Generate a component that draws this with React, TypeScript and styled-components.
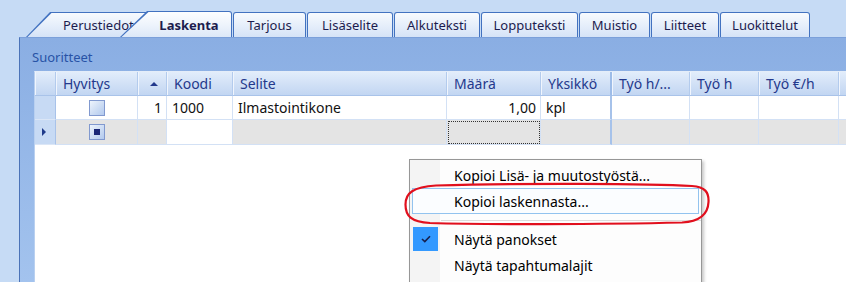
import React from "react";
import styled, { createGlobalStyle, css } from "styled-components";

const GlobalStyle = createGlobalStyle`
  html, body {
    margin: 0;
    padding: 0;
  }
  body {
    background: #c6dbf5;
    font-family: "Noto Sans", "Open Sans", sans-serif;
  }
`;

const Screen = styled.div`
  position: relative;
  width: 846px;
  height: 282px;
  overflow: hidden;
  display: flex;
  flex-direction: column;
  background: #c6dbf5;
`;

const TabStrip = styled.div`
  display: flex;
  align-items: flex-end;
  height: 37px;
  padding-left: 26px;
  box-sizing: border-box;
`;

const TabShell = styled.div<{ $w: number; $selected?: boolean; $slant?: number; $overlap?: number }>`
  position: relative;
  z-index: ${(p) => (p.$selected ? 2 : 1)};
  flex: none;
  width: ${(p) => p.$w}px;
  height: ${(p) => (p.$selected ? 26 : 25)}px;
  margin-left: ${(p) => -(p.$overlap ?? 0)}px;
  margin-right: 1px;
  box-sizing: border-box;
  padding: 1px 1px 0 ${(p) => (p.$slant ? 0 : 1)}px;
  background: #4272c0;
  border-radius: 3px 3px 0 0;
  ${(p) =>
    p.$slant &&
    css`
      clip-path: polygon(${p.$slant}px 0, 100% 0, 100% 100%, 0 100%);
    `}
`;

const TabFace = styled.div<{ $selected?: boolean; $slant?: number; $pad?: number; $left?: boolean }>`
  height: 100%;
  box-sizing: border-box;
  border-radius: 2px 2px 0 0;
  display: flex;
  align-items: center;
  justify-content: ${(p) => (p.$left ? "flex-start" : "center")};
  padding-left: ${(p) => p.$pad ?? 0}px;
  background: ${(p) =>
    p.$selected
      ? "linear-gradient(#fdfeff, #eef4fc 50%, #dce8f8)"
      : "linear-gradient(#f7fafe, #e8f0fb 45%, #d5e3f7)"};
  font-size: 13px;
  font-weight: ${(p) => (p.$selected ? 700 : 400)};
  color: #1c1c4e;
  white-space: nowrap;
  overflow: hidden;
  ${(p) =>
    p.$slant &&
    css`
      clip-path: polygon(${p.$slant + 1.5}px 0, 100% 0, 100% 100%, 1.5px 100%);
    `}
`;

const Panel = styled.div`
  flex: 1;
  min-height: 0;
  margin-left: 19px;
  border-left: 1px solid #4b73b8;
  border-top: 1px solid #7ba0da;
  background: linear-gradient(#8aaee3, #a3c3ee);
  display: flex;
  flex-direction: column;
`;

const SectionTitle = styled.div`
  height: 33px;
  box-sizing: border-box;
  padding: 10px 0 0 12px;
  font-size: 13px;
  line-height: 18px;
  color: #2853a6;
`;

const Table = styled.div`
  flex: 1;
  margin-left: 14px;
  border-left: 1px solid #b9d0f0;
  border-top: 1px solid #e4edf9;
  background: #ffffff;
`;

const columns = "21px 82px 29px 66px 214px 94px 71px 78px 69px 80px 1fr";

const Row = styled.div<{ $h: number }>`
  display: grid;
  grid-template-columns: ${columns};
  height: ${(p) => p.$h}px;
`;

const HeadCell = styled.div<{ $thick?: boolean; $center?: boolean }>`
  box-sizing: border-box;
  display: flex;
  align-items: center;
  justify-content: ${(p) => (p.$center ? "center" : "flex-start")};
  padding: 0 ${(p) => (p.$center ? 0 : 7)}px;
  background: linear-gradient(#e2edfb, #d2e1f6 50%, #c2d6f2);
  border-right: ${(p) => (p.$thick ? "2px solid #9dbce8" : "1px solid #b3cbed")};
  border-bottom: 1px solid #a9c3e9;
  box-shadow: inset 1px 0 #f0f5fd;
  color: #24398c;
  font-size: 14px;
  white-space: nowrap;
  overflow: hidden;
`;

const Cell = styled.div<{ $bg?: string; $right?: boolean; $center?: boolean; $thick?: boolean; $focus?: boolean }>`
  box-sizing: border-box;
  display: flex;
  align-items: center;
  justify-content: ${(p) => (p.$right ? "flex-end" : p.$center ? "center" : "flex-start")};
  padding: 0 4px 0 5px;
  background: ${(p) => p.$bg ?? "#ffffff"};
  border-right: ${(p) => (p.$thick ? "2px solid #a6c2ea" : "1px solid #d3e1f5")};
  border-bottom: 1px solid #d3e1f5;
  color: #111111;
  font-size: 14px;
  white-space: nowrap;
  ${(p) =>
    p.$focus &&
    css`
      outline: 1px dotted #333333;
      outline-offset: -2px;
    `}
`;

const RowHead = styled.div`
  box-sizing: border-box;
  display: flex;
  align-items: center;
  justify-content: center;
  background: #c7daf4;
  border-right: 1px solid #a8c2e9;
  border-bottom: 1px solid #dbe6f6;
`;

const SortArrow = styled.span`
  width: 0;
  height: 0;
  border-left: 4px solid transparent;
  border-right: 4px solid transparent;
  border-bottom: 4px solid #22388c;
  margin-left: 3px;
`;

const RowPointer = styled.span`
  width: 0;
  height: 0;
  border-top: 4px solid transparent;
  border-bottom: 4px solid transparent;
  border-left: 4px solid #1e3a8a;
  margin-left: -2px;
`;

const CheckBox = styled.span<{ $mark?: boolean }>`
  width: 16px;
  height: 16px;
  box-sizing: border-box;
  border: 1px solid #8199cf;
  background: linear-gradient(135deg, #eef4fc, #c9daf3 60%, #b3caee);
  display: flex;
  align-items: center;
  justify-content: center;
  &::after {
    content: "";
    display: ${(p) => (p.$mark ? "block" : "none")};
    width: 6px;
    height: 6px;
    background: #1b2777;
  }
`;

const Menu = styled.div`
  position: absolute;
  left: 409px;
  top: 159px;
  width: 293px;
  height: 140px;
  box-sizing: border-box;
  padding: 2px 0;
  border: 1px solid #979797;
  background: linear-gradient(to right, #f4f4f4 0 30px, #fdfdfd 30px);
  box-shadow: 2px 2px 3px rgba(0, 0, 0, 0.22);
`;

const MenuItem = styled.div<{ $hot?: boolean }>`
  height: 26px;
  margin: 0 2px;
  box-sizing: border-box;
  display: flex;
  align-items: stretch;
  border: 1px solid ${(p) => (p.$hot ? "#92c3ef" : "transparent")};
  background: ${(p) => (p.$hot ? "#fbfdff" : "transparent")};
  font-size: 14px;
  color: #000000;
`;

const Gutter = styled.div<{ $on?: boolean }>`
  width: 25px;
  flex: none;
  display: flex;
  align-items: center;
  justify-content: center;
  background: ${(p) => (p.$on ? "#3399ff" : "transparent")};
`;

const ItemLabel = styled.div`
  display: flex;
  align-items: center;
  padding-left: 16px;
  white-space: nowrap;
`;

const Separator = styled.div`
  height: 12px;
  display: flex;
  align-items: center;
  padding-left: 31px;
  &::after {
    content: "";
    flex: 1;
    height: 1px;
    background: #dcdcdc;
  }
`;

const Annotation = styled.svg`
  position: absolute;
  left: 400px;
  top: 179px;
`;

const tabs = [
  { label: "Tarjous", w: 73 },
  { label: "Lisäselite", w: 86 },
  { label: "Alkuteksti", w: 86 },
  { label: "Lopputeksti", w: 97 },
  { label: "Muistio", w: 71 },
  { label: "Liitteet", w: 68 },
  { label: "Luokittelut", w: 90 },
];

const headers = ["Määrä", "Yksikkö", "Työ h/...", "Työ h", "Työ €/h", ""];

function App() {
  return (
    <>
      <GlobalStyle />
      <Screen>
        <TabStrip>
          <TabShell $w={124} $slant={24}>
            <TabFace $slant={24} $left $pad={37}>
              Perustiedot
            </TabFace>
          </TabShell>
          <TabShell $w={112} $slant={27} $overlap={31} $selected>
            <TabFace $slant={27} $pad={27} $selected>
              Laskenta
            </TabFace>
          </TabShell>
          {tabs.map((t) => (
            <TabShell key={t.label} $w={t.w}>
              <TabFace>{t.label}</TabFace>
            </TabShell>
          ))}
        </TabStrip>

        <Panel>
          <SectionTitle>Suoritteet</SectionTitle>
          <Table>
            <Row $h={24}>
              <HeadCell />
              <HeadCell>Hyvitys</HeadCell>
              <HeadCell $center>
                <SortArrow />
              </HeadCell>
              <HeadCell>Koodi</HeadCell>
              <HeadCell>Selite</HeadCell>
              {headers.map((h, i) => (
                <HeadCell key={i} $thick={h === "Yksikkö"}>
                  {h}
                </HeadCell>
              ))}
            </Row>
            <Row $h={24}>
              <RowHead />
              <Cell $center>
                <CheckBox />
              </Cell>
              <Cell $right>1</Cell>
              <Cell>1000</Cell>
              <Cell>Ilmastointikone</Cell>
              <Cell $right>1,00</Cell>
              <Cell $thick>kpl</Cell>
              <Cell />
              <Cell />
              <Cell />
              <Cell />
            </Row>
            <Row $h={25}>
              <RowHead>
                <RowPointer />
              </RowHead>
              <Cell $center $bg="#e4e4e4">
                <CheckBox $mark />
              </Cell>
              <Cell $bg="#e4e4e4" />
              <Cell />
              <Cell $bg="#e4e4e4" />
              <Cell $bg="#e4e4e4" $focus />
              <Cell $bg="#e4e4e4" $thick />
              <Cell $bg="#e4e4e4" />
              <Cell $bg="#e4e4e4" />
              <Cell $bg="#e4e4e4" />
              <Cell $bg="#e4e4e4" />
            </Row>
          </Table>
        </Panel>

        <Menu>
          <MenuItem>
            <Gutter />
            <ItemLabel>Kopioi Lisä- ja muutostyöstä...</ItemLabel>
          </MenuItem>
          <MenuItem $hot>
            <Gutter />
            <ItemLabel>Kopioi laskennasta...</ItemLabel>
          </MenuItem>
          <Separator />
          <MenuItem>
            <Gutter $on>
              <svg width="10" height="8" viewBox="0 0 10 8">
                <path d="M1 4 L3.8 6.6 L9 1.2" fill="none" stroke="#17204d" strokeWidth="1.6" />
              </svg>
            </Gutter>
            <ItemLabel>Näytä panokset</ItemLabel>
          </MenuItem>
          <MenuItem>
            <Gutter />
            <ItemLabel>Näytä tapahtumalajit</ItemLabel>
          </MenuItem>
        </Menu>

        <Annotation width="316" height="50" viewBox="0 0 316 50">
          <path
            d="M36 6.5 C120 4 250 4.5 292 7 C305 8 309 13 308.5 23 C308 35 301 42.5 282 43.5 C200 45.5 80 45.5 30 44 C11 43 5.5 37 5.5 25.5 C5.5 14 13 8 36 6.5 Z"
            fill="none"
            stroke="#e10f1d"
            strokeWidth="2.2"
          />
        </Annotation>
      </Screen>
    </>
  );
}

export default App;
